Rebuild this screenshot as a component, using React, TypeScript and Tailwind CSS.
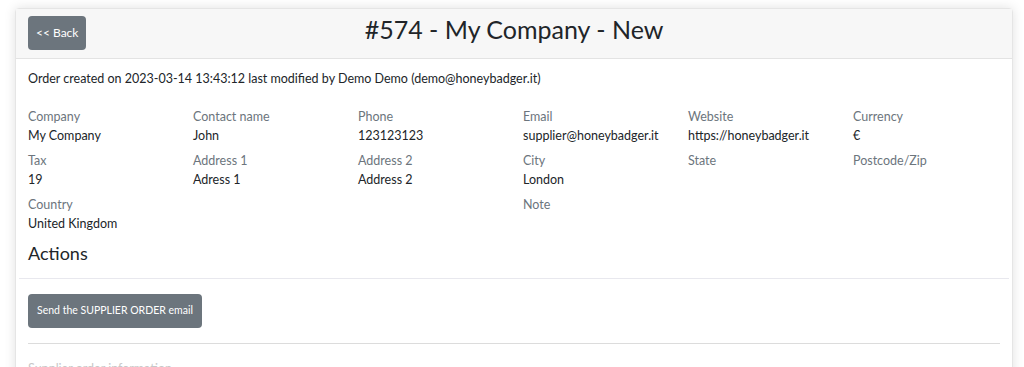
const fields = [
  { label: "Company", value: "My Company" },
  { label: "Contact name", value: "John" },
  { label: "Phone", value: "123123123" },
  { label: "Email", value: "supplier@honeybadger.it" },
  { label: "Website", value: "https://honeybadger.it" },
  { label: "Currency", value: "€" },
  { label: "Tax", value: "19" },
  { label: "Address 1", value: "Adress 1" },
  { label: "Address 2", value: "Address 2" },
  { label: "City", value: "London" },
  { label: "State", value: "" },
  { label: "Postcode/Zip", value: "" },
  { label: "Country", value: "United Kingdom" },
  { label: "", value: "" },
  { label: "", value: "" },
  { label: "Note", value: "" },
];

export default function App() {
  return (
    <div
      className="min-h-[367px] bg-white pl-[15px] pr-[11px] pt-[8px] text-[12.5px] text-[#212529]"
      style={{ fontFamily: "Lato, 'Noto Sans', sans-serif" }}
    >
      <div className="rounded-[4px] border border-[#e5e5e5] bg-white shadow-[0_0_12px_rgba(0,0,0,0.12)]">
        {/* Header */}
        <div className="relative flex h-[50px] items-center border-b border-[#e3e3e3] bg-[#f7f7f7] px-[12px]">
          <button className="mt-[-1px] h-[34px] rounded-[4px] bg-[#6c757d] px-[8px] text-[12px] text-white">
            &lt;&lt; Back
          </button>
          <h1 className="pointer-events-none absolute left-0 right-0 top-[4px] text-center text-[25px] leading-[32px] text-[#212529]">
            #574 - My Company - New
          </h1>
        </div>

        {/* Body */}
        <div className="px-[12px] pt-[10px]">
          <p className="leading-[20px]">
            Order created on 2023-03-14 13:43:12 last modified by Demo Demo (demo@honeybadger.it)
          </p>

          <div className="mt-[18px] grid grid-cols-[repeat(6,165px)] gap-y-[6px]">
            {fields.map((f, i) => (
              <div key={i} className="min-h-[38px]">
                {f.label && <div className="leading-[19px] text-[#6c757d]">{f.label}</div>}
                {f.value && <div className="leading-[19px]">{f.value}</div>}
              </div>
            ))}
          </div>

          <h2 className="mt-[8px] text-[18px] leading-[24px]">Actions</h2>
        </div>
        <hr className="mx-[3px] mt-[13px] border-t border-[#e8e8ee]" />

        <div className="px-[12px] pt-[15px]">
          <button className="h-[34px] rounded-[4px] bg-[#6c757d] px-[9px] text-[10.5px] text-white">
            Send the SUPPLIER ORDER email
          </button>
          <hr className="mt-[15px] border-t border-[#dcdcdc]" />
          <p className="mt-[16px] text-[#c8c8c8]">Supplier order information</p>
        </div>
      </div>
    </div>
  );
}
